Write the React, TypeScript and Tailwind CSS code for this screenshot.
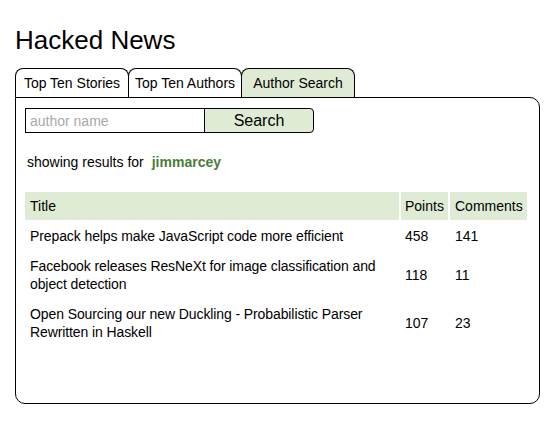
import React from "react";

const rows = [
  { title: "Prepack helps make JavaScript code more efficient", points: 458, comments: 141 },
  { title: "Facebook releases ResNeXt for image classification and object detection", points: 118, comments: 11 },
  { title: "Open Sourcing our new Duckling - Probabilistic Parser Rewritten in Haskell", points: 107, comments: 23 },
];

export default function App() {
  return (
    <div
      className="w-[557px] h-[425px] bg-white text-black pl-[15px] pt-[25px]"
      style={{ fontFamily: '"Liberation Sans", Arial, Helvetica, sans-serif' }}
    >
      <h1 className="text-[26px] leading-[30px] font-normal mb-[13px]">Hacked News</h1>
      <div className="flex">
        <div className="w-[114px] h-[29px] flex items-center justify-center border border-b-0 border-black rounded-t-[8px] bg-white text-[14px]">
          Top Ten Stories
        </div>
        <div className="-ml-px w-[114px] h-[29px] flex items-center justify-center border border-b-0 border-black rounded-t-[8px] bg-white text-[14px]">
          Top Ten Authors
        </div>
        <div className="-ml-px w-[114px] h-[29px] flex items-center justify-center border border-b-0 border-black rounded-t-[8px] bg-[#dfebd5] text-[14px]">
          Author Search
        </div>
      </div>
      <div className="w-[525px] h-[307px] border border-black rounded-tr-[10px] rounded-b-[10px] pl-[9px] pt-[10px]">
        <div className="flex h-[25px]">
          <input
            className="w-[180px] h-[25px] border border-black px-[4px] text-[14px] outline-none placeholder:text-[#a9a9a9]"
            placeholder="author name"
            style={{ fontFamily: '"Liberation Sans", Arial, sans-serif' }}
          />
          <button
            className="-ml-px w-[110px] h-[25px] border border-black rounded-r-[4px] bg-[#dfebd5] text-[16px] leading-[20px]"
            style={{ fontFamily: '"Liberation Sans", Arial, sans-serif' }}
          >
            Search
          </button>
        </div>
        <div className="mt-[20px] ml-[2px] text-[14px] leading-[18px] flex">
          <span>showing results for</span>
          <span className="ml-[8px] font-bold text-[#4b7d3a]">jimmarcey</span>
        </div>
        <div className="mt-[21px] grid grid-cols-[374px_47px_77px] gap-x-[2px] gap-y-[2px] text-[14px] leading-[18px]">
          <div className="bg-[#dfebd5] px-[5px] py-[5px]">Title</div>
          <div className="bg-[#dfebd5] px-[4px] py-[5px]">Points</div>
          <div className="bg-[#dfebd5] px-[5px] py-[5px]">Comments</div>
          {rows.map((r) => (
            <React.Fragment key={r.title}>
              <div className="px-[5px] py-[5px] tracking-[-0.1px]">{r.title}</div>
              <div className="px-[4px] py-[5px] flex items-center">{r.points}</div>
              <div className="px-[5px] py-[5px] flex items-center">{r.comments}</div>
            </React.Fragment>
          ))}
        </div>
      </div>
    </div>
  );
}
